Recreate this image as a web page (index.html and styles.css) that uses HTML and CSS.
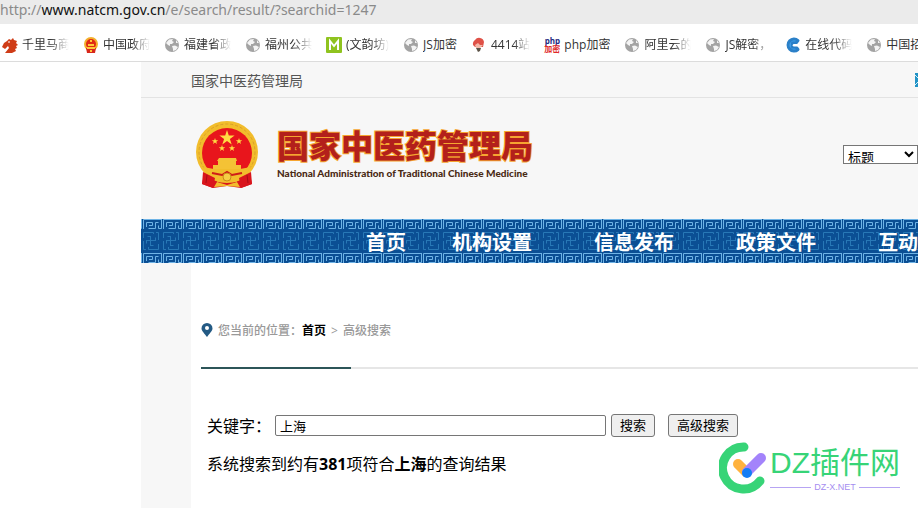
FILE: index.html
```html
<!DOCTYPE html>
<html lang="zh-CN">
<head>
  <meta charset="UTF-8">
  <meta name="viewport" content="width=device-width, initial-scale=1.0">
  <title>国家中医药管理局</title>
  <link rel="stylesheet" href="styles.css">
</head>
<body>
  <!-- Shared icons -->
  <svg class="defs" width="0" height="0" aria-hidden="true">
    <symbol id="globe" viewBox="0 0 16 16">
      <circle cx="8" cy="8" r="7" fill="#a3a3a3"/>
      <path d="M2 6 5 2.500 9 2 8 4 10 5 8 7 6 7 6 9 4 8zM8 9 11 8.500 14 10 12 13 9 14 9 12zM12 3 14 6 12 6z" fill="#f4f4f4"/>
    </symbol>
  </svg>

  <!-- Address Bar -->
  <div class="address-bar">http://<span>www.natcm.gov.cn</span>/e/search/result/?searchid=1247</div>

  <!-- Bookmarks -->
  <div class="bookmarks">
    <a href="#">
      <svg viewBox="0 0 16 16"><path d="M0 10 2 6 5 4 7 2 9 3 11 1 12 3 15 4 14 6 16 8 14 9 15 11 13 12 14 14 10 16H3L7 11 6 9 3 12z" fill="#cf3c17"/><path d="M6 5 8 5" stroke="#fff"/></svg>
      <span>千里马商</span>
    </a>
    <a href="#">
      <svg viewBox="0 0 16 16"><circle cx="8" cy="7" r="6" fill="#e02a14" stroke="#f3b02c" stroke-width="2"/><path d="M3 11H13L12 16H4z" fill="#d8271a"/><path d="M5 8H11M4 11H12M7 14H9M8 3V5" stroke="#ffc83a" stroke-width="2"/></svg>
      <span>中国政府</span>
    </a>
    <a href="#"><svg><use href="#globe"/></svg><span>福建省政</span></a>
    <a href="#"><svg><use href="#globe"/></svg><span>福州公共</span></a>
    <a href="#">
      <svg viewBox="0 0 16 16"><rect width="16" height="16" rx="1" fill="#8fc31f"/><path d="M4 13V4L8 9 12 4V13" fill="none" stroke="#fff" stroke-width="2"/></svg>
      <span>(文韵坊)</span>
    </a>
    <a href="#"><svg><use href="#globe"/></svg><span class="full">JS加密</span></a>
    <a href="#">
      <svg viewBox="0 0 16 16"><path d="M2 8A5 5 0 0 1 4 3 5 5 0 0 1 13 5L12 10H4z" fill="#df5147"/><path d="M4 8 7 6 9 8 12 8 9 11H5z" fill="#f3b8a8"/><path d="M5 11H10L9 14 7 15z" fill="#5c5347"/></svg>
      <span>4414站</span>
    </a>
    <a href="#">
      <span class="php-icon"><b>php</b><i>加密</i></span>
      <span class="full">php加密</span>
    </a>
    <a href="#"><svg><use href="#globe"/></svg><span>阿里云的</span></a>
    <a href="#"><svg><use href="#globe"/></svg><span>JS解密，</span></a>
    <a href="#">
      <svg viewBox="0 0 16 16"><path d="M13 3.500A6 6 0 1 0 13 12.500L11 10H7.500V6H11z" fill="#3d9be6" stroke="#2b80c8" stroke-width="3" stroke-linejoin="round"/><path d="M16 7H9A1 1 0 0 0 9 9.500H16" fill="#fff"/></svg>
      <span>在线代码</span>
    </a>
    <a href="#"><svg><use href="#globe"/></svg><span class="full">中国招</span></a>
  </div>

  <!-- Site -->
  <div class="site">
    <div class="top-bar">
      <span>国家中医药管理局</span>
      <a href="#" aria-label="邮箱"><svg viewBox="0 0 3 14" width="3" height="14"><path d="M0 0H3V14H0z" fill="#2193c6"/><path d="M0 2 3 5M0 12 3 9" stroke="#d7eef8"/></svg></a>
    </div>

    <div class="header">
      <a href="#" class="brand">
        <svg class="emblem" viewBox="0 0 64 70">
          <path d="M10 50 7 64 18 68 32 66 46 68 57 64 54 50z" fill="#d9151c"/>
          <circle cx="32" cy="32" r="31" fill="#f2bd2c"/>
          <circle cx="32" cy="32" r="28" fill="none" stroke="#d9a02a" stroke-dasharray="3 2"/>
          <circle cx="32" cy="33" r="25" fill="#e8151c"/>
          <path d="M32 10 33.800 15.500H39.600L34.900 19 36.700 24.500 32 21.100 27.300 24.500 29.100 19 24.400 15.500H30.200z" fill="#ffdc42"/>
          <path id="star" d="M20 18 20.800 20.300H23.200L21.300 21.800 22 24 20 22.600 18 24 18.700 21.800 16.800 20.300H19.200z" fill="#ffdc42"/>
          <use href="#star" x="24"/>
          <use href="#star" x="7" y="7"/>
          <use href="#star" x="17" y="7"/>
          <path d="M24 38H41L42 41H22zM23 41H41V45H46V49H18V45H23z" fill="#f4c235"/>
          <path d="M8 47 19 49H45L56 47 51 55 41 62 32 59 23 62 13 55z" fill="#f2bd2c"/>
          <path d="M17 53 27 55 32 52 37 55 47 53" fill="none" stroke="#cf1c18" stroke-width="2"/>
          <circle cx="32" cy="57" r="4" fill="#f5ce45" stroke="#c98a19"/>
          <path d="M8 52 20 58 18 68 7 64zM56 52 44 58 46 68 57 64z" fill="#d9151c"/>
          <path d="M22 62 32 65 42 62 45 67 32 66 19 67z" fill="#f2bd2c"/>
          <path d="M12 55 11 63M52 55 53 63" stroke="#a80d15"/>
        </svg>
        <span class="brand-text">
          <strong>国家中医药管理局</strong>
          <em>National Administration of Traditional Chinese Medicine</em>
        </span>
      </a>
      <select aria-label="搜索范围">
        <option>标题</option>
      </select>
    </div>

    <div class="nav">
      <!-- Meander pattern behind the menu -->
      <svg class="nav-pattern" aria-hidden="true">
        <defs>
          <pattern id="edge" width="20" height="10" patternUnits="userSpaceOnUse">
            <path d="M2.500 10V.5H20M5.500 8V3.500H11.500V6.500H8M7.500 9.500H14.500V3.500H17.500M17.500 6.500V9.500H22M0 9.500H.5V0" fill="none" stroke="#6fb4e6"/>
          </pattern>
          <pattern id="key" width="20" height="20" patternUnits="userSpaceOnUse">
            <path d="M9.500 5V15M5 9.500H15M9.500 5.500H6.500M9.500 14.500H12.500M5.500 9V12.500M14.500 10V6.500M2.500 7V1.500H12.500V3M17.500 13V18.500H7.500V16M2.500 10V18.500H5M17.500 9V1.500H15" fill="none" stroke="#2878b6"/>
          </pattern>
        </defs>
        <rect width="100%" height="10" fill="url(#edge)"/>
        <svg y="12" width="100%" height="20"><rect width="100%" height="20" fill="url(#key)"/></svg>
        <svg y="34" width="100%" height="10"><rect width="100%" height="10" fill="url(#edge)"/></svg>
      </svg>
      <ul>
        <li class="home"><a href="#">首页</a></li>
        <li><a href="#">机构设置</a></li>
        <li><a href="#">信息发布</a></li>
        <li><a href="#">政策文件</a></li>
        <li><a href="#">互动</a></li>
      </ul>
    </div>

    <!-- Main Content -->
    <div class="main-content">
      <div class="breadcrumb">
        <svg viewBox="0 0 12 16" width="12" height="16"><path d="M6 0A5.500 5.500 0 0 0 .5 5.500C.5 8 4 11 6 14 8 11 11.500 8 11.500 5.500A5.500 5.500 0 0 0 6 0z" fill="#235a84"/><circle cx="6" cy="5" r="2" fill="#fff"/></svg>
        <div><b>您当前的位置：</b><a href="#">首页</a><span>&gt;</span><b>高级搜索</b></div>
      </div>
      <div class="divider"></div>

      <form class="search-form">
        <label for="keyword">关键字：</label>
        <input type="text" id="keyword" value="上海">
        <button type="button">搜索</button>
        <button type="button" class="advanced">高级搜索</button>
      </form>
      <p class="result">系统搜索到约有<b>381</b>项符合<b>上海</b>的查询结果</p>
    </div>
  </div>

  <!-- Watermark -->
  <div class="watermark">
    <svg viewBox="0 0 48 52" width="48" height="52">
      <path d="M25 5A21 21 0 1 0 41 39" fill="none" stroke="#37d477" stroke-width="9" stroke-linecap="round"/>
      <path d="M19 22 27 30" stroke="#ffb23e" stroke-width="10" stroke-linecap="round"/>
      <path d="M28 30 42 16" stroke="#a383fb" stroke-width="10" stroke-linecap="round"/>
      <circle cx="28" cy="31" r="5" fill="#147df5"/>
    </svg>
    <div>
      <div class="watermark-name">DZ插件网</div>
      <div class="watermark-url">DZ-X.NET</div>
    </div>
  </div>
</body>
</html>
```
FILE: styles.css
```css
/* General Reset */
* {
  margin: 0;
  padding: 0;
  box-sizing: border-box;
}

body {
  position: relative;
  min-height: 100vh;
  display: flex;
  flex-direction: column;
  overflow: hidden;
  background-color: #fff;
  color: #000;
  font-family: "Open Sans", "Noto Sans CJK SC", sans-serif;
}

a {
  color: inherit;
  text-decoration: none;
}

.defs {
  position: absolute;
}

/* Address Bar */
.address-bar {
  height: 24px;
  background-color: #ebebeb;
  color: #8a8a8a;
  font-family: "Noto Sans", sans-serif;
  font-size: 14px;
  line-height: 20px;
  white-space: nowrap;
}

.address-bar span {
  color: #111;
}

/* Bookmarks */
.bookmarks {
  display: flex;
  align-items: center;
  gap: 14px;
  height: 38px;
  padding: 4px 0 0 2px;
  border-bottom: 1px solid #dcdcdc;
  overflow: hidden;
  font-size: 12px;
  line-height: 20px;
  color: #333;
}

.bookmarks a {
  display: flex;
  align-items: center;
  flex-shrink: 0;
  gap: 4px;
}

.bookmarks svg {
  width: 16px;
  height: 16px;
}

.bookmarks span {
  max-width: 47px;
  overflow: hidden;
  white-space: nowrap;
  mask-image: linear-gradient(to right, #000 60%, transparent);
}

.bookmarks .full {
  max-width: none;
  mask-image: none;
}

.bookmarks .php-icon {
  display: flex;
  flex-direction: column;
  align-items: center;
  width: 16px;
  overflow: visible;
  mask-image: none;
  color: #1d2a80;
  font-size: 8px;
  line-height: 8px;
}

.php-icon i {
  color: #e02a2a;
  font-style: normal;
  font-weight: bold;
}

/* Site */
.site {
  flex: 1;
  display: flex;
  flex-direction: column;
  margin-left: 141px;
  background-color: #f7f7f7;
}

.top-bar {
  display: flex;
  align-items: center;
  justify-content: space-between;
  height: 36px;
  padding-left: 50px;
  border-bottom: 1px solid #e3e3e3;
  color: #555;
  font-size: 14px;
}

.top-bar svg {
  display: block;
}

.header {
  display: flex;
  align-items: center;
  justify-content: space-between;
  height: 121px;
  padding: 0 0 8px 54px;
}

.brand {
  display: flex;
  align-items: center;
  gap: 18px;
}

.emblem {
  width: 64px;
  height: 70px;
}

.brand-text {
  display: flex;
  flex-direction: column;
}

.brand-text strong {
  color: #b3201b;
  font-size: 32px;
  font-weight: 900;
  line-height: 36px;
  -webkit-text-stroke: 2px #f6a531;
  paint-order: stroke fill;
}

.brand-text em {
  color: #4a2a14;
  font-family: "Lato", sans-serif;
  font-size: 10px;
  font-style: normal;
  font-weight: 900;
  line-height: 18px;
  white-space: nowrap;
}

.header select {
  width: 75px;
  height: 19px;
  border: 1px solid #767676;
  background-color: #fff;
  font-family: "Noto Sans CJK SC", sans-serif;
  font-size: 13px;
  line-height: 16px;
}

/* Navigation */
.nav {
  position: relative;
  height: 44px;
  background-color: #0b4f94;
  overflow: hidden;
}

.nav-pattern {
  position: absolute;
  top: 0;
  left: 0;
  width: 100%;
  height: 44px;
}

.nav ul {
  position: relative;
  display: flex;
  padding-left: 210px;
  list-style: none;
}

.nav li {
  flex-shrink: 0;
  padding: 0 31px;
  color: #fff;
  font-size: 20px;
  font-weight: bold;
  line-height: 48px;
}

.nav .home {
  padding: 0 15px;
}

/* Main Content */
.main-content {
  flex: 1;
  margin-left: 50px;
  padding: 58px 0 0 10px;
  background-color: #fff;
}

.breadcrumb {
  display: flex;
  align-items: center;
  gap: 5px;
  color: #999;
  font-size: 12px;
  line-height: 20px;
}

.breadcrumb b {
  font-weight: 500;
}

.breadcrumb span {
  margin: 0 5px;
}

.breadcrumb a {
  color: #000;
  font-weight: bold;
}

.divider {
  height: 2px;
  margin-top: 26px;
  background: linear-gradient(to right, #2c5558 150px, #e6e6e6 150px);
}

.search-form {
  display: flex;
  align-items: center;
  height: 24px;
  margin: 44px 0 0 6px;
  font-size: 16px;
}

.search-form label {
  width: 68px;
  white-space: nowrap;
}

.search-form input {
  width: 331px;
  height: 21px;
  padding: 0 4px;
  border: 1px solid #767676;
  border-radius: 2px;
  font-family: inherit;
  font-size: 13px;
}

.search-form button {
  height: 23px;
  margin-left: 5px;
  padding: 0 8px;
  border: 1px solid #767676;
  border-radius: 3px;
  background-color: #efefef;
  color: #000;
  font-family: inherit;
  font-size: 13px;
  line-height: 20px;
}

.search-form .advanced {
  margin-left: 13px;
}

.result {
  margin: 15px 0 0 6px;
  font-size: 16px;
  line-height: 24px;
}

/* Watermark */
.watermark {
  position: absolute;
  right: 18px;
  bottom: 14px;
  display: flex;
  align-items: center;
  gap: 3px;
}

.watermark-name {
  color: #37d477;
  font-family: "Liberation Sans", "Noto Sans CJK SC", sans-serif;
  font-size: 30px;
  line-height: 38px;
}

.watermark-url {
  display: flex;
  align-items: center;
  gap: 3px;
  color: #a58df0;
  font-family: "Liberation Sans", sans-serif;
  font-size: 9px;
  line-height: 10px;
}

.watermark-url::before,
.watermark-url::after {
  content: "";
  flex: 1;
  height: 1px;
  background-color: #b7a4f3;
}
```
